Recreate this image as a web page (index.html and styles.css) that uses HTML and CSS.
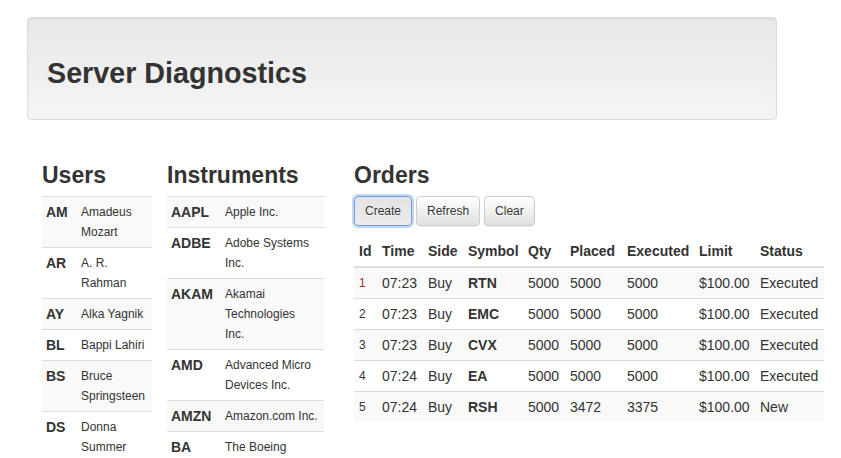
FILE: index.html
```html
<!DOCTYPE html>
<html>
<head>
<meta charset="utf-8">
<title>Server Diagnostics</title>
<link rel="stylesheet" href="styles.css">
</head>
<body>
<div class="page">
  <div class="well">
    <h2 class="title">Server Diagnostics</h2>
  </div>
  <div class="columns">
    <section class="users">
      <h3 class="heading">Users</h3>
      <table class="table list">
        <tbody>
          <tr><td class="code ucode">AM</td><td class="name uname">Amadeus Mozart</td></tr>
          <tr><td class="code">AR</td><td class="name">A. R. Rahman</td></tr>
          <tr><td class="code">AY</td><td class="name">Alka Yagnik</td></tr>
          <tr><td class="code">BL</td><td class="name">Bappi Lahiri</td></tr>
          <tr><td class="code">BS</td><td class="name">Bruce Springsteen</td></tr>
          <tr><td class="code">DS</td><td class="name">Donna Summer</td></tr>
        </tbody>
      </table>
    </section>
    <section class="instruments">
      <h3 class="heading">Instruments</h3>
      <table class="table list">
        <tbody>
          <tr><td class="code icode">AAPL</td><td class="name iname">Apple Inc.</td></tr>
          <tr><td class="code">ADBE</td><td class="name">Adobe Systems Inc.</td></tr>
          <tr><td class="code">AKAM</td><td class="name">Akamai Technologies<br>Inc.</td></tr>
          <tr><td class="code">AMD</td><td class="name">Advanced Micro Devices Inc.</td></tr>
          <tr><td class="code">AMZN</td><td class="name">Amazon.com Inc.</td></tr>
          <tr><td class="code">BA</td><td class="name">The Boeing Company</td></tr>
        </tbody>
      </table>
    </section>
    <section class="orders">
      <h3 class="heading">Orders</h3>
      <div class="toolbar">
        <button class="btn btn-focus">Create</button>
        <button class="btn">Refresh</button>
        <button class="btn">Clear</button>
      </div>
      <table class="table otable">
        <thead>
          <tr>
            <th class="c-id">Id</th>
            <th class="c-time">Time</th>
            <th class="c-side">Side</th>
            <th class="c-sym">Symbol</th>
            <th class="c-qty">Qty</th>
            <th class="c-placed">Placed</th>
            <th class="c-exec">Executed</th>
            <th class="c-limit">Limit</th>
            <th class="c-status">Status</th>
          </tr>
        </thead>
        <tbody>
          <tr><td class="oid oid-new">1</td><td>07:23</td><td>Buy</td><td class="sym">RTN</td><td>5000</td><td>5000</td><td>5000</td><td>$100.00</td><td>Executed</td></tr>
          <tr><td class="oid">2</td><td>07:23</td><td>Buy</td><td class="sym">EMC</td><td>5000</td><td>5000</td><td>5000</td><td>$100.00</td><td>Executed</td></tr>
          <tr><td class="oid">3</td><td>07:23</td><td>Buy</td><td class="sym">CVX</td><td>5000</td><td>5000</td><td>5000</td><td>$100.00</td><td>Executed</td></tr>
          <tr><td class="oid">4</td><td>07:24</td><td>Buy</td><td class="sym">EA</td><td>5000</td><td>5000</td><td>5000</td><td>$100.00</td><td>Executed</td></tr>
          <tr><td class="oid">5</td><td>07:24</td><td>Buy</td><td class="sym">RSH</td><td>5000</td><td>3472</td><td>3375</td><td>$100.00</td><td>New</td></tr>
        </tbody>
      </table>
    </section>
  </div>
</div>
</body>
</html>
```
FILE: styles.css
```css
* { box-sizing: border-box; }
html, body { margin: 0; padding: 0; overflow: hidden; background: #fff; }
body {
  font-family: "Liberation Sans", Arial, sans-serif;
  font-size: 14px;
  line-height: 20px;
  color: #333;
}
.page { padding: 17px 0 0 27px; }
.well {
  width: 750px;
  height: 103px;
  padding: 19px;
  border: 1px solid #dcdcdc;
  border-radius: 4px;
  background: linear-gradient(to bottom, #e8e8e8 0%, #f5f5f5 100%);
  box-shadow: inset 0 1px 3px rgba(0,0,0,.05), 0 1px 0 rgba(255,255,255,.1);
}
.title {
  margin: 20px 0 0;
  font-size: 28.7px;
  line-height: 33px;
  font-weight: 700;
  color: #333;
}
.columns {
  display: flex;
  padding-left: 15px;
  padding-top: 42px;
}
.users { width: 110px; flex-shrink: 0; margin-right: 15px; }
.instruments { width: 157px; flex-shrink: 0; margin-right: 30px; }
.orders { width: 470px; flex-shrink: 0; }
.heading {
  margin: 0 0 8px;
  font-size: 23px;
  line-height: 26px;
  font-weight: 700;
  color: #333;
}
.table {
  width: 100%;
  border-collapse: collapse;
  border-spacing: 0;
  table-layout: fixed;
}
.list td {
  padding: 5px 4px;
  border-top: 1px solid #ddd;
  vertical-align: top;
  line-height: 20px;
}
.list tbody tr:nth-child(odd) td { background: #f9f9f9; }
.code { font-weight: 700; font-size: 14px; }
.name { font-size: 12px; }
.list td.name { padding-right: 5px; }
.ucode { width: 35px; }
.uname { width: 75px; }
.icode { width: 54px; }
.iname { width: 103px; }

.toolbar { display: flex; gap: 4px; margin-bottom: 10px; }
.btn {
  height: 30px;
  padding: 5px 10px;
  font-family: "Liberation Sans", Arial, sans-serif;
  font-size: 12px;
  line-height: 18px;
  color: #333;
  border: 1px solid #ccc;
  border-radius: 4px;
  background: linear-gradient(to bottom, #fff 0%, #e0e0e0 100%);
  text-shadow: 0 1px 0 #fff;
  box-shadow: inset 0 1px 0 rgba(255,255,255,.15), 0 1px 1px rgba(0,0,0,.075);
}
.btn-focus {
  background: linear-gradient(to bottom, #e2e2e2 0%, #ececec 100%);
  border-color: #6f9fd6;
  box-shadow: 0 0 0 2px rgba(120,170,230,.45);
}
.otable th {
  padding: 5px;
  text-align: left;
  font-weight: 700;
  vertical-align: bottom;
  border-bottom: 2px solid #ddd;
}
.otable td {
  padding: 5px;
  border-top: 1px solid #ddd;
  vertical-align: top;
  white-space: nowrap;
}
.otable tbody tr:first-child td { border-top: 0; }
.otable tbody tr:nth-child(odd) td { background: #f9f9f9; }
.c-id { width: 23px; }
.c-time { width: 46px; }
.c-side { width: 40px; }
.c-sym { width: 60px; }
.c-qty { width: 42px; }
.c-placed { width: 57px; }
.c-exec { width: 72px; }
.c-limit { width: 61px; }
.c-status { width: 69px; }
.oid { font-size: 12px; }
.oid-new { color: #a52a2a; }
.sym { font-weight: 700; }
```
